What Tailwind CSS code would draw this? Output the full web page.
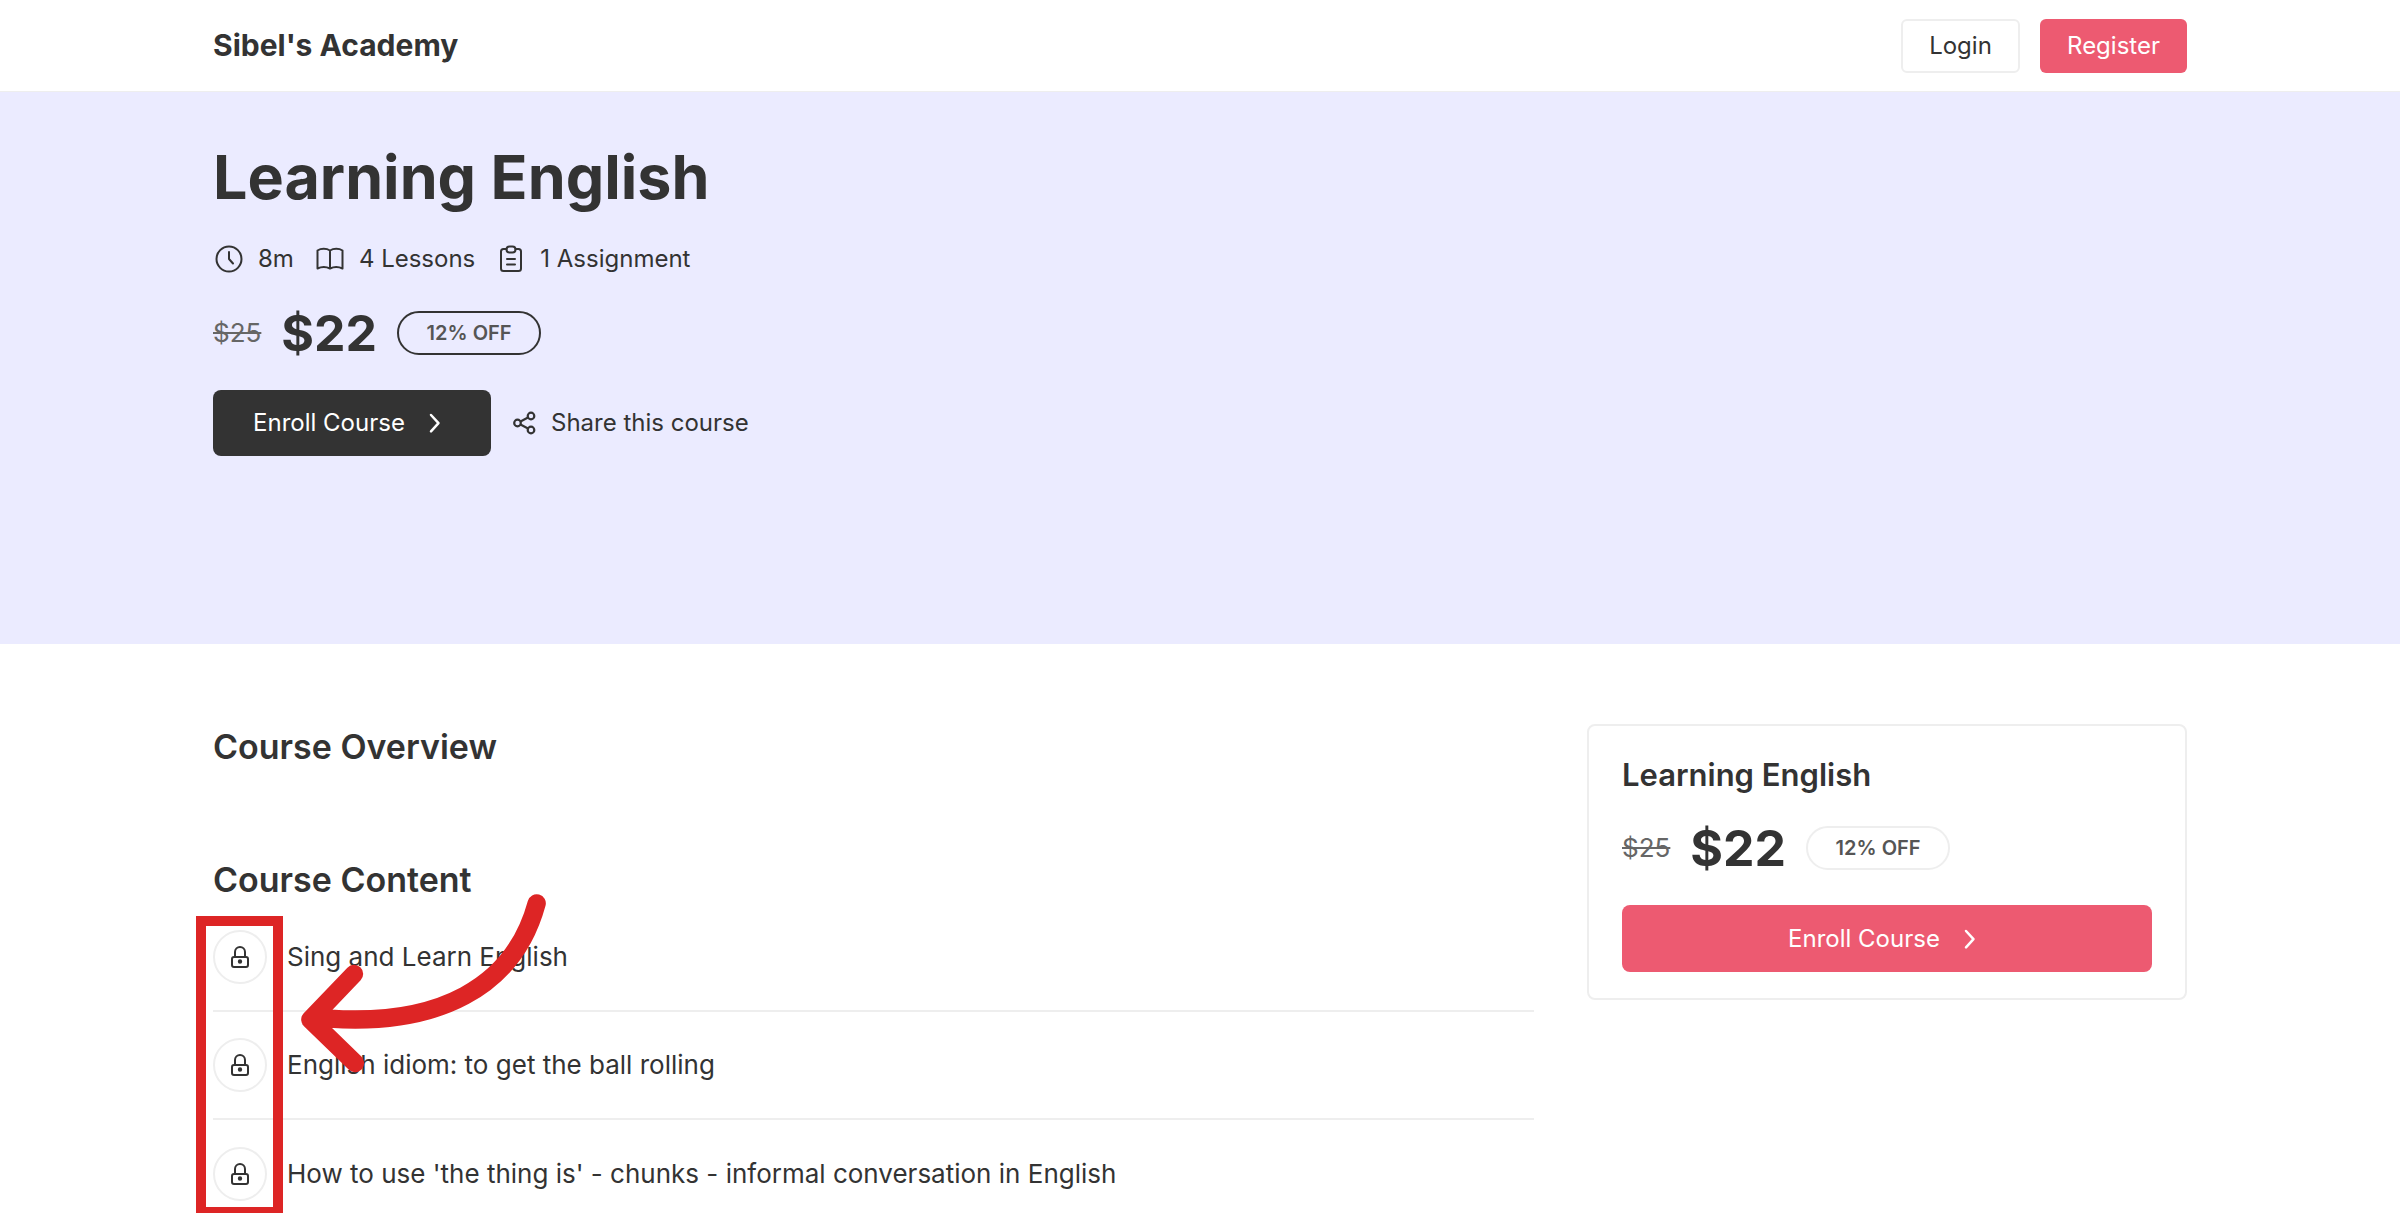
<!DOCTYPE html>
<html lang="en">
<head>
<meta charset="utf-8">
<meta name="viewport" content="width=device-width, initial-scale=1">
<title>Learning English - Sibel's Academy</title>
<script src="https://cdn.jsdelivr.net/npm/@tailwindcss/browser@4"></script>
</head>
<body class="h-screen overflow-hidden bg-white font-[Inter,sans-serif] text-2xl text-[#333]">
<svg class="hidden" aria-hidden="true">
  <symbol id="lock" viewBox="0 0 28 28" fill="none" stroke="currentColor" stroke-width="2" stroke-linecap="round" stroke-linejoin="round">
    <rect x="6" y="14" width="16" height="10" rx="2"/><path d="M9 14V9a5 5 0 0 1 10 0v5"/><circle cx="14" cy="18.500" r="1.200" fill="currentColor"/>
  </symbol>
  <symbol id="chevron" viewBox="0 0 24 24" fill="none" stroke="currentColor" stroke-width="2.500" stroke-linecap="round" stroke-linejoin="round">
    <path d="M8 4l7.500 8.200L8 20.400"/>
  </symbol>
</svg>

<header class="flex h-[92px] items-center justify-between border-b border-[#eee] px-[213px]">
  <a href="#" class="text-[30px] font-bold">Sibel's Academy</a>
  <nav class="flex gap-5">
    <button type="button" class="h-[54px] w-[119px] rounded-md border-2 border-[#eee]">Login</button>
    <button type="button" class="h-[54px] w-[147px] rounded-md bg-[#ed5a71] text-white">Register</button>
  </nav>
</header>

<section class="h-[552px] bg-[#ebebff] px-[213px] pt-[45px]">
  <h1 class="text-[61px] leading-20 font-bold">Learning English</h1>
  <ul class="mt-[26px] flex h-8 items-center gap-5">
    <li class="flex items-center gap-[13px]">
      <svg class="size-8" viewBox="0 0 32 32" fill="none" stroke="currentColor" stroke-width="2" stroke-linecap="round" stroke-linejoin="round"><circle cx="16" cy="16" r="12.500"/><path d="M16 9v7l4 4.500"/></svg>
      8m
    </li>
    <li class="flex items-center gap-[13px]">
      <svg class="size-8" viewBox="0 0 32 32" fill="none" stroke="currentColor" stroke-width="2" stroke-linecap="round" stroke-linejoin="round"><path d="M16 7.500C12.500 5.300 7 5.300 3.500 7.500V25.500C7 23.800 12.500 23.800 16 25.500C19.500 23.800 25 23.800 28.500 25.500V7.500C25 5.300 19.500 5.300 16 7.500ZM16 7.500V25.500"/></svg>
      4 Lessons
    </li>
    <li class="flex items-center gap-[13px]">
      <svg class="size-8" viewBox="0 0 32 32" fill="none" stroke="currentColor" stroke-width="2" stroke-linecap="round" stroke-linejoin="round"><path d="M11.500 6H8.500Q6 6 6 8.500V25.500Q6 28 8.500 28H23.500Q26 28 26 25.500V8.500Q26 6 23.500 6H20.500M12 16h8M12 21.500h8"/><rect x="11.500" y="3.500" width="9" height="6" rx="3"/></svg>
      1 Assignment
    </li>
  </ul>
  <div class="mt-7 flex h-[60px] items-center gap-5">
    <del class="text-[26px] text-[#666]">$25</del>
    <strong class="text-[50px] font-bold">$22</strong>
    <span class="flex h-11 w-36 items-center justify-center rounded-full border-2 border-[#333] text-xl font-semibold text-[#555]">12% OFF</span>
  </div>
  <div class="mt-[27px] flex items-center gap-5">
    <button type="button" class="flex h-[66px] w-[278px] items-center justify-center gap-[18px] rounded-lg bg-[#333] pr-1 text-white">Enroll Course <svg class="size-6"><use href="#chevron"/></svg></button>
    <a href="#" class="flex items-center gap-3">
      <svg class="size-7" viewBox="0 0 28 28" fill="none" stroke="currentColor" stroke-width="2.200"><circle cx="6.500" cy="14" r="3.300"/><circle cx="20" cy="7" r="3.300"/><circle cx="20" cy="21" r="3.300"/><path d="M9.500 12.400L17 8.600M9.500 15.600L17 19.400"/></svg>
      Share this course
    </a>
  </div>
</section>

<main class="flex items-start gap-[53px] px-[213px] pt-20">
  <div class="min-w-0 flex-1">
    <h2 class="text-[34px] leading-[46px] font-semibold">Course Overview</h2>
    <h2 class="mt-[87px] text-[34px] leading-[46px] font-semibold">Course Content</h2>
    <div class="relative mt-px">
      <ul class="divide-y-2 divide-[#eee] text-[26px]">
        <li class="flex h-[108px] items-center gap-5"><span class="grid size-[54px] shrink-0 place-items-center rounded-full border-2 border-[#eee]"><svg class="size-7"><use href="#lock"/></svg></span>Sing and Learn English</li>
        <li class="flex h-[108px] items-center gap-5"><span class="grid size-[54px] shrink-0 place-items-center rounded-full border-2 border-[#eee]"><svg class="size-7"><use href="#lock"/></svg></span>English idiom: to get the ball rolling</li>
        <li class="flex h-[108px] items-center gap-5"><span class="grid size-[54px] shrink-0 place-items-center rounded-full border-2 border-[#eee]"><svg class="size-7"><use href="#lock"/></svg></span>How to use 'the thing is' - chunks - informal conversation in English</li>
      </ul>
      <div class="absolute top-3 -left-[17px] h-[301px] w-[87px] border-10 border-[#dd2525]"></div>
      <svg class="absolute -top-[25px] left-[67px] h-[233px] w-[300px]" viewBox="300 0 900 699" fill="none" stroke="#dd2525" stroke-width="55" stroke-linecap="round" stroke-linejoin="round"><path d="M1070 73C1000 330 770 440 450 419M522 285L391 422L525 552M391 422L450 419"/></svg>
    </div>
  </div>
  <aside class="w-[600px] shrink-0 rounded-lg border-2 border-[#eee] px-[33px] pt-[29px] pb-[26px]">
    <h2 class="text-[31px] leading-10 font-semibold">Learning English</h2>
    <div class="mt-[23px] flex h-[60px] items-center gap-5">
      <del class="text-[26px] text-[#666]">$25</del>
      <strong class="text-[50px] font-bold">$22</strong>
      <span class="flex h-11 w-36 items-center justify-center rounded-full border-2 border-[#eee] text-xl font-semibold text-[#555]">12% OFF</span>
    </div>
    <button type="button" class="mt-[27px] flex h-[67px] w-full items-center justify-center gap-[18px] rounded-lg bg-[#ed5a71] pr-1 text-white">Enroll Course <svg class="size-6"><use href="#chevron"/></svg></button>
  </aside>
</main>
</body>
</html>
